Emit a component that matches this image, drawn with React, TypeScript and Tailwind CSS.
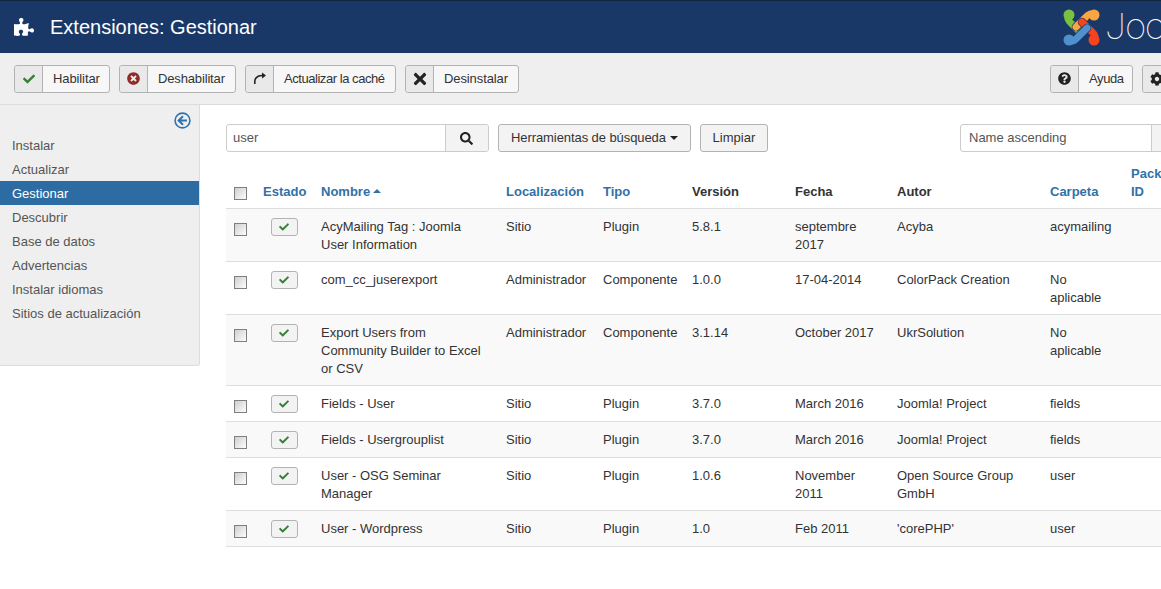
import { FaCheck, FaCog, FaPuzzlePiece, FaQuestionCircle, FaSearch, FaTimes, FaTimesCircle } from "react-icons/fa";
import type { ReactNode } from "react";

const nav = ["Instalar", "Actualizar", "Gestionar", "Descubrir", "Base de datos", "Advertencias", "Instalar idiomas", "Sitios de actualización"];

const rows = [
  { name: "AcyMailing Tag : Joomla User Information", loc: "Sitio", type: "Plugin", ver: "5.8.1", date: "septembre 2017", author: "Acyba", folder: "acymailing" },
  { name: "com_cc_juserexport", loc: "Administrador", type: "Componente", ver: "1.0.0", date: "17-04-2014", author: "ColorPack Creation", folder: "No aplicable" },
  { name: "Export Users from Community Builder to Excel or CSV", loc: "Administrador", type: "Componente", ver: "3.1.14", date: "October 2017", author: "UkrSolution", folder: "No aplicable" },
  { name: "Fields - User", loc: "Sitio", type: "Plugin", ver: "3.7.0", date: "March 2016", author: "Joomla! Project", folder: "fields" },
  { name: "Fields - Usergrouplist", loc: "Sitio", type: "Plugin", ver: "3.7.0", date: "March 2016", author: "Joomla! Project", folder: "fields" },
  { name: "User - OSG Seminar Manager", loc: "Sitio", type: "Plugin", ver: "1.0.6", date: "November 2011", author: "Open Source Group GmbH", folder: "user" },
  { name: "User - Wordpress", loc: "Sitio", type: "Plugin", ver: "1.0", date: "Feb 2011", author: "'corePHP'", folder: "user" },
];

function ToolButton({ icon, label, className }: { icon: ReactNode; label: string; className: string }) {
  return (
    <button className={`flex h-[28px] shrink-0 items-stretch rounded-[3px] border border-[#b3b3b3] bg-[#f7f7f7] text-[#333] ${className}`}>
      <span className="flex w-[28px] shrink-0 items-center justify-center rounded-l-[3px] border-r border-[#b3b3b3] bg-[#e9e9e9]">{icon}</span>
      <span className="flex items-center whitespace-nowrap pl-[10px]">{label}</span>
    </button>
  );
}

function Checkbox() {
  return <span className="block h-[13px] w-[13px] border border-[#7f7f7f] bg-[linear-gradient(135deg,#cfcfcf,#fdfdfd)]" />;
}

function RefreshIcon() {
  return (
    <svg width="14" height="14" viewBox="0 0 14 14">
      <path d="M2 12 C0.8 6.5 4 3.2 10 3.6" fill="none" stroke="#222" strokeWidth="1.6" />
      <path d="M9 0.6 L13 3.6 L9 6.4 Z" fill="#222" />
    </svg>
  );
}

const arms = [
  { d: "M5 10 C6 13 8 14 10 16 L18 24", color: "#7ac143", x: 6, y: 6 },
  { d: "M27 5 C24 6 23 8 21 10 L13 18", color: "#f9a541", x: 31, y: 6 },
  { d: "M32 27 C31 24 29 23 27 21 L19 13", color: "#f44321", x: 31, y: 31 },
  { d: "M10 32 C13 31 14 29 16 27 L24 19", color: "#5091cd", x: 6, y: 31 },
];

function JoomlaLogo() {
  return (
    <svg width="37" height="37" viewBox="0 0 37 37" fill="none" strokeLinecap="round" className="shrink-0">
      {arms.map((arm) => (
        <g key={arm.color}>
          <path d={arm.d} stroke="#1a3867" strokeWidth="8.5" />
          <path d={arm.d} stroke={arm.color} strokeWidth="7" />
          <circle cx={arm.x} cy={arm.y} r="5.5" fill={arm.color} />
        </g>
      ))}
    </svg>
  );
}

export default function App() {
  return (
    <div className="h-[589px] w-[1161px] overflow-hidden bg-white font-['Liberation_Sans',Arial,sans-serif] text-[13px] leading-[18px] text-[#333]">
      <header className="flex h-[53px] items-center overflow-hidden border-t border-t-[#10243f] bg-[#1a3867] pl-[14px] text-white">
        <FaPuzzlePiece className="h-[20px] w-[20px]" />
        <h1 className="ml-[16px] text-[20px] font-normal">Extensiones: Gestionar</h1>
        <div className="ml-auto flex w-[98px] shrink-0 items-center overflow-hidden">
          <JoomlaLogo />
          <span className="ml-[6px] font-['Roboto',sans-serif] text-[36px] font-thin leading-none text-white">Joomla</span>
        </div>
      </header>

      <div className="flex h-[52px] items-center gap-[9px] border-b border-[#dcdcdc] bg-[#efefef] pl-[14px]">
        <ToolButton icon={<FaCheck className="h-[12px] w-[12px] text-[#378137]" />} label="Habilitar" className="w-[96px] tracking-[-0.1px]" />
        <ToolButton icon={<FaTimesCircle className="h-[13px] w-[13px] text-[#942a25]" />} label="Deshabilitar" className="w-[117px] tracking-[-0.15px]" />
        <ToolButton icon={<RefreshIcon />} label="Actualizar la caché" className="w-[151px] tracking-[-0.45px]" />
        <ToolButton icon={<FaTimes className="h-[18px] w-[18px] text-[#222]" />} label="Desinstalar" className="w-[114px] tracking-[-0.1px]" />
        <div className="ml-auto flex w-[111px] shrink-0 gap-[9px]">
          <ToolButton icon={<FaQuestionCircle className="h-[13px] w-[13px] text-[#222]" />} label="Ayuda" className="w-[83px] tracking-[-0.4px]" />
          <ToolButton icon={<FaCog className="h-[14px] w-[14px] text-[#222]" />} label="Opciones" className="w-[100px]" />
        </div>
      </div>

      <div className="flex items-start">
        <aside className="h-[261px] w-[200px] shrink-0 rounded-br-[3px] border-r border-b border-[#dcdcdc] bg-[#efefef]">
          <div className="flex h-[28px] justify-end pt-[7px] pr-[8px]">
            <svg width="17" height="17" viewBox="0 0 17 17" fill="none" stroke="#2f72ad">
              <circle cx="8.5" cy="8.5" r="7.4" strokeWidth="1.6" />
              <path d="M9 4.2 L4.6 8.5 L9 12.8 M4.8 8.5 H13" strokeWidth="2" />
            </svg>
          </div>
          <nav>
            {nav.map((item) => (
              <div key={item} className={`h-[24px] pl-[12px] leading-[26px] ${item === "Gestionar" ? "bg-[#2d6ca2] text-white" : "text-[#555]"}`}>
                {item}
              </div>
            ))}
          </nav>
        </aside>

        <main className="min-w-0 flex-1 pl-[26px] pt-[19px]">
          <div className="flex h-[28px] items-center">
            <div className="flex h-[28px] w-[263px] rounded-[3px] border border-[#ccc]">
              <span className="flex flex-1 items-center pl-[6px] text-[#555]">user</span>
              <span className="flex w-[43px] items-center justify-center rounded-r-[3px] border-l border-[#ccc] bg-[#f3f3f3] pr-[2px]">
                <FaSearch className="h-[13px] w-[13px] text-[#222]" />
              </span>
            </div>
            <button className="ml-[9px] flex h-[28px] items-center rounded-[3px] border border-[#b3b3b3] bg-[#f3f3f3] px-[12px] tracking-[-0.08px]">
              Herramientas de búsqueda
              <span className="ml-[4px] border-x-[4px] border-t-[4px] border-x-transparent border-t-[#222]" />
            </button>
            <button className="ml-[9px] flex h-[28px] w-[68px] items-center justify-center rounded-[3px] border border-[#b3b3b3] bg-[#f3f3f3]">Limpiar</button>
            <div className="ml-auto mr-[-40px] flex h-[28px] w-[241px] shrink-0 rounded-l-[3px] border border-[#ccc]">
              <span className="flex w-[190px] shrink-0 items-center pl-[8px] text-[#555]">Name ascending</span>
              <span className="w-[40px] border-l border-[#ccc] bg-[#f3f3f3]" />
            </div>
          </div>

          <table className="mt-[13px] w-[935px] table-fixed border-collapse">
            <colgroup>
              <col className="w-[29px]" />
              <col className="w-[58px]" />
              <col className="w-[185px]" />
              <col className="w-[97px]" />
              <col className="w-[89px]" />
              <col className="w-[103px]" />
              <col className="w-[102px]" />
              <col className="w-[153px]" />
              <col className="w-[81px]" />
              <col className="w-[38px]" />
            </colgroup>
            <thead>
              <tr className="border-b border-[#ddd] text-left align-bottom font-bold">
                <th className="pb-[8px] pl-[8px]"><Checkbox /></th>
                <th className="px-[8px] pb-[7px] text-[#3071a9]">Estado</th>
                <th className="px-[8px] pb-[7px] text-[#3071a9]">
                  Nombre
                  <span className="ml-[3px] inline-block border-x-[4px] border-b-[4px] border-x-transparent border-b-[#3071a9] align-[3px]" />
                </th>
                <th className="px-[8px] pb-[7px] text-[#3071a9]">Localización</th>
                <th className="px-[8px] pb-[7px] text-[#3071a9]">Tipo</th>
                <th className="px-[8px] pb-[7px]">Versión</th>
                <th className="px-[8px] pb-[7px]">Fecha</th>
                <th className="px-[8px] pb-[7px]">Autor</th>
                <th className="px-[8px] pb-[7px] text-[#3071a9]">Carpeta</th>
                <th className="pb-[7px] pl-[8px] text-[#3071a9]">Package ID</th>
              </tr>
            </thead>
            <tbody>
              {rows.map((row, i) => (
                <tr key={row.name} className={`border-b border-[#ddd] align-top ${i % 2 === 0 ? "bg-[#f9f9f9]" : "bg-white"}`}>
                  <td className="pl-[8px] pt-[14px]"><Checkbox /></td>
                  <td className="pt-[9px] pb-[8px]">
                    <span className="mx-auto flex h-[18px] w-[27px] items-center justify-center rounded-[3px] border border-[#b3b3b3] bg-[#f3f3f3]">
                      <FaCheck className="h-[10px] w-[10px] text-[#378137]" />
                    </span>
                  </td>
                  <td className="px-[8px] pt-[9px] pb-[7px]">{row.name}</td>
                  <td className="px-[8px] pt-[9px] pb-[7px]">{row.loc}</td>
                  <td className="px-[8px] pt-[9px] pb-[7px]">{row.type}</td>
                  <td className="px-[8px] pt-[9px] pb-[7px]">{row.ver}</td>
                  <td className="px-[8px] pt-[9px] pb-[7px]">{row.date}</td>
                  <td className="px-[8px] pt-[9px] pb-[7px]">{row.author}</td>
                  <td className="px-[8px] pt-[9px] pb-[7px]">{row.folder}</td>
                  <td className="p-[8px]" />
                </tr>
              ))}
            </tbody>
          </table>
        </main>
      </div>
    </div>
  );
}
